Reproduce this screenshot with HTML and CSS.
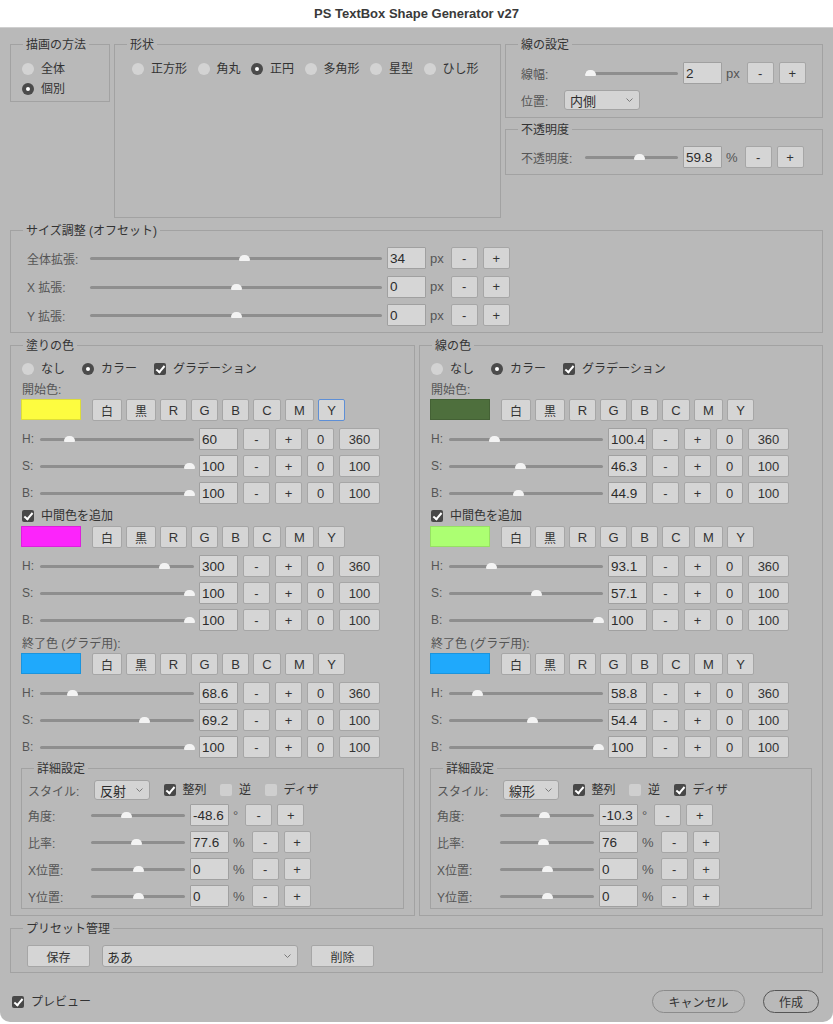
FILE: index.html
```html
<!DOCTYPE html>
<html lang="ja">
<head>
    <meta charset="UTF-8">
    <meta name="viewport" content="width=device-width, initial-scale=1.0">
    <title>PS TextBox Shape Generator v27</title>
    <link rel="stylesheet" href="styles.css">
</head>
<body>
<div class="window">
    <div class="titlebar">PS TextBox Shape Generator v27</div>
    <div class="content">

        <div class="top-row">
            <fieldset class="group method">
                <legend>描画の方法</legend>
                <div class="opt method-line"><span class="radio"></span>全体</div>
                <div class="opt method-line"><span class="radio on"></span>個別</div>
            </fieldset>

            <fieldset class="group shape">
                <legend>形状</legend>
                <div class="shape-row">
                    <span class="opt"><span class="radio"></span>正方形</span>
                    <span class="opt"><span class="radio"></span>角丸</span>
                    <span class="opt"><span class="radio on"></span>正円</span>
                    <span class="opt"><span class="radio"></span>多角形</span>
                    <span class="opt"><span class="radio"></span>星型</span>
                    <span class="opt"><span class="radio"></span>ひし形</span>
                </div>
            </fieldset>

            <div class="stack">
                <fieldset class="group stroke">
                    <legend>線の設定</legend>
                    <div class="ctl-row">
                        <span class="lbl w64">線幅:</span>
                        <div class="slider s93"><span class="thumb" style="--v:0.01"></span></div>
                        <input class="field" type="text" value="2">
                        <span class="unit">px</span>
                        <button class="btn pm">-</button>
                        <button class="btn pm">+</button>
                    </div>
                    <div class="ctl-row pos-row">
                        <span class="lbl w43">位置:</span>
                        <div class="select sel-pos">内側<svg viewBox="0 0 7 4"><polyline points="0.5,0.5 3.5,3.5 6.5,0.5"/></svg></div>
                    </div>
                </fieldset>

                <fieldset class="group opacity">
                    <legend>不透明度</legend>
                    <div class="ctl-row">
                        <span class="lbl w64">不透明度:</span>
                        <div class="slider s93"><span class="thumb" style="--v:0.598"></span></div>
                        <input class="field" type="text" value="59.8">
                        <span class="unit">%</span>
                        <button class="btn pm">-</button>
                        <button class="btn pm">+</button>
                    </div>
                </fieldset>
            </div>
        </div>

        <fieldset class="group size">
            <legend>サイズ調整 (オフセット)</legend>
            <div class="ctl-row size-row">
                <span class="lbl w63">全体拡張:</span>
                <div class="slider s292"><span class="thumb" style="--v:0.53"></span></div>
                <input class="field" type="text" value="34">
                <span class="unit">px</span>
                <button class="btn pm">-</button>
                <button class="btn pm">+</button>
            </div>
            <div class="ctl-row size-row">
                <span class="lbl w63">X 拡張:</span>
                <div class="slider s292"><span class="thumb" style="--v:0.5"></span></div>
                <input class="field" type="text" value="0">
                <span class="unit">px</span>
                <button class="btn pm">-</button>
                <button class="btn pm">+</button>
            </div>
            <div class="ctl-row size-row">
                <span class="lbl w63">Y 拡張:</span>
                <div class="slider s292"><span class="thumb" style="--v:0.5"></span></div>
                <input class="field" type="text" value="0">
                <span class="unit">px</span>
                <button class="btn pm">-</button>
                <button class="btn pm">+</button>
            </div>
        </fieldset>

        <div class="colors">
            <!-- fill -->
            <fieldset class="group color-panel">
                <legend>塗りの色</legend>
                <div class="opts">
                    <span class="opt"><span class="radio"></span>なし</span>
                    <span class="opt"><span class="radio on"></span>カラー</span>
                    <span class="opt"><span class="check on"></span>グラデーション</span>
                </div>
                <div class="lbl cap">開始色:</div>
                <div class="swatch-row">
                    <span class="swatch yellow"></span>
                    <button class="btn cbtn kj">白</button><button class="btn cbtn kj">黒</button><button class="btn cbtn">R</button><button class="btn cbtn">G</button><button class="btn cbtn">B</button><button class="btn cbtn c">C</button><button class="btn cbtn m">M</button><button class="btn cbtn focus">Y</button>
                </div>
                <div class="ctl-row hsv-row">
                    <span class="lbl w18">H:</span>
                    <div class="slider s154"><span class="thumb" style="--v:0.167"></span></div>
                    <input class="field" type="text" value="60">
                    <button class="btn pm">-</button><button class="btn pm">+</button><button class="btn pm">0</button><button class="btn lim">360</button>
                </div>
                <div class="ctl-row hsv-row">
                    <span class="lbl w18">S:</span>
                    <div class="slider s154"><span class="thumb" style="--v:1"></span></div>
                    <input class="field" type="text" value="100">
                    <button class="btn pm">-</button><button class="btn pm">+</button><button class="btn pm">0</button><button class="btn lim">100</button>
                </div>
                <div class="ctl-row hsv-row">
                    <span class="lbl w18">B:</span>
                    <div class="slider s154"><span class="thumb" style="--v:1"></span></div>
                    <input class="field" type="text" value="100">
                    <button class="btn pm">-</button><button class="btn pm">+</button><button class="btn pm">0</button><button class="btn lim">100</button>
                </div>

                <div class="opts mid-check">
                    <span class="opt"><span class="check on"></span>中間色を追加</span>
                </div>
                <div class="swatch-row">
                    <span class="swatch magenta"></span>
                    <button class="btn cbtn kj">白</button><button class="btn cbtn kj">黒</button><button class="btn cbtn">R</button><button class="btn cbtn">G</button><button class="btn cbtn">B</button><button class="btn cbtn c">C</button><button class="btn cbtn m">M</button><button class="btn cbtn">Y</button>
                </div>
                <div class="ctl-row hsv-row">
                    <span class="lbl w18">H:</span>
                    <div class="slider s154"><span class="thumb" style="--v:0.833"></span></div>
                    <input class="field" type="text" value="300">
                    <button class="btn pm">-</button><button class="btn pm">+</button><button class="btn pm">0</button><button class="btn lim">360</button>
                </div>
                <div class="ctl-row hsv-row">
                    <span class="lbl w18">S:</span>
                    <div class="slider s154"><span class="thumb" style="--v:1"></span></div>
                    <input class="field" type="text" value="100">
                    <button class="btn pm">-</button><button class="btn pm">+</button><button class="btn pm">0</button><button class="btn lim">100</button>
                </div>
                <div class="ctl-row hsv-row">
                    <span class="lbl w18">B:</span>
                    <div class="slider s154"><span class="thumb" style="--v:1"></span></div>
                    <input class="field" type="text" value="100">
                    <button class="btn pm">-</button><button class="btn pm">+</button><button class="btn pm">0</button><button class="btn lim">100</button>
                </div>

                <div class="lbl cap end-cap">終了色 (グラデ用):</div>
                <div class="swatch-row">
                    <span class="swatch blue"></span>
                    <button class="btn cbtn kj">白</button><button class="btn cbtn kj">黒</button><button class="btn cbtn">R</button><button class="btn cbtn">G</button><button class="btn cbtn">B</button><button class="btn cbtn c">C</button><button class="btn cbtn m">M</button><button class="btn cbtn">Y</button>
                </div>
                <div class="ctl-row hsv-row">
                    <span class="lbl w18">H:</span>
                    <div class="slider s154"><span class="thumb" style="--v:0.19"></span></div>
                    <input class="field" type="text" value="68.6">
                    <button class="btn pm">-</button><button class="btn pm">+</button><button class="btn pm">0</button><button class="btn lim">360</button>
                </div>
                <div class="ctl-row hsv-row">
                    <span class="lbl w18">S:</span>
                    <div class="slider s154"><span class="thumb" style="--v:0.692"></span></div>
                    <input class="field" type="text" value="69.2">
                    <button class="btn pm">-</button><button class="btn pm">+</button><button class="btn pm">0</button><button class="btn lim">100</button>
                </div>
                <div class="ctl-row hsv-row">
                    <span class="lbl w18">B:</span>
                    <div class="slider s154"><span class="thumb" style="--v:1"></span></div>
                    <input class="field" type="text" value="100">
                    <button class="btn pm">-</button><button class="btn pm">+</button><button class="btn pm">0</button><button class="btn lim">100</button>
                </div>

                <fieldset class="group detail">
                    <legend>詳細設定</legend>
                    <div class="ctl-row style-row">
                        <span class="lbl w66">スタイル:</span>
                        <div class="select sel-style">反射<svg viewBox="0 0 7 4"><polyline points="0.5,0.5 3.5,3.5 6.5,0.5"/></svg></div>
                        <span class="opt"><span class="check on"></span>整列</span>
                        <span class="opt"><span class="check"></span>逆</span>
                        <span class="opt"><span class="check"></span>ディザ</span>
                    </div>
                    <div class="ctl-row detail-row">
                        <span class="lbl w63">角度:</span>
                        <div class="slider s94"><span class="thumb" style="--v:0.36"></span></div>
                        <input class="field" type="text" value="-48.6">
                        <span class="unit">°</span>
                        <button class="btn pm">-</button><button class="btn pm">+</button>
                    </div>
                    <div class="ctl-row detail-row">
                        <span class="lbl w63">比率:</span>
                        <div class="slider s94"><span class="thumb" style="--v:0.48"></span></div>
                        <input class="field" type="text" value="77.6">
                        <span class="unit">%</span>
                        <button class="btn pm">-</button><button class="btn pm">+</button>
                    </div>
                    <div class="ctl-row detail-row">
                        <span class="lbl w63">X位置:</span>
                        <div class="slider s94"><span class="thumb" style="--v:0.5"></span></div>
                        <input class="field" type="text" value="0">
                        <span class="unit">%</span>
                        <button class="btn pm">-</button><button class="btn pm">+</button>
                    </div>
                    <div class="ctl-row detail-row">
                        <span class="lbl w63">Y位置:</span>
                        <div class="slider s94"><span class="thumb" style="--v:0.5"></span></div>
                        <input class="field" type="text" value="0">
                        <span class="unit">%</span>
                        <button class="btn pm">-</button><button class="btn pm">+</button>
                    </div>
                </fieldset>
            </fieldset>

            <!-- stroke -->
            <fieldset class="group color-panel right">
                <legend>線の色</legend>
                <div class="opts">
                    <span class="opt"><span class="radio"></span>なし</span>
                    <span class="opt"><span class="radio on"></span>カラー</span>
                    <span class="opt"><span class="check on"></span>グラデーション</span>
                </div>
                <div class="lbl cap">開始色:</div>
                <div class="swatch-row">
                    <span class="swatch green"></span>
                    <button class="btn cbtn kj">白</button><button class="btn cbtn kj">黒</button><button class="btn cbtn">R</button><button class="btn cbtn">G</button><button class="btn cbtn">B</button><button class="btn cbtn c">C</button><button class="btn cbtn m">M</button><button class="btn cbtn">Y</button>
                </div>
                <div class="ctl-row hsv-row">
                    <span class="lbl w18">H:</span>
                    <div class="slider s154"><span class="thumb" style="--v:0.279"></span></div>
                    <input class="field" type="text" value="100.4">
                    <button class="btn pm">-</button><button class="btn pm">+</button><button class="btn pm">0</button><button class="btn lim">360</button>
                </div>
                <div class="ctl-row hsv-row">
                    <span class="lbl w18">S:</span>
                    <div class="slider s154"><span class="thumb" style="--v:0.463"></span></div>
                    <input class="field" type="text" value="46.3">
                    <button class="btn pm">-</button><button class="btn pm">+</button><button class="btn pm">0</button><button class="btn lim">100</button>
                </div>
                <div class="ctl-row hsv-row">
                    <span class="lbl w18">B:</span>
                    <div class="slider s154"><span class="thumb" style="--v:0.449"></span></div>
                    <input class="field" type="text" value="44.9">
                    <button class="btn pm">-</button><button class="btn pm">+</button><button class="btn pm">0</button><button class="btn lim">100</button>
                </div>

                <div class="opts mid-check">
                    <span class="opt"><span class="check on"></span>中間色を追加</span>
                </div>
                <div class="swatch-row">
                    <span class="swatch lime"></span>
                    <button class="btn cbtn kj">白</button><button class="btn cbtn kj">黒</button><button class="btn cbtn">R</button><button class="btn cbtn">G</button><button class="btn cbtn">B</button><button class="btn cbtn c">C</button><button class="btn cbtn m">M</button><button class="btn cbtn">Y</button>
                </div>
                <div class="ctl-row hsv-row">
                    <span class="lbl w18">H:</span>
                    <div class="slider s154"><span class="thumb" style="--v:0.259"></span></div>
                    <input class="field" type="text" value="93.1">
                    <button class="btn pm">-</button><button class="btn pm">+</button><button class="btn pm">0</button><button class="btn lim">360</button>
                </div>
                <div class="ctl-row hsv-row">
                    <span class="lbl w18">S:</span>
                    <div class="slider s154"><span class="thumb" style="--v:0.571"></span></div>
                    <input class="field" type="text" value="57.1">
                    <button class="btn pm">-</button><button class="btn pm">+</button><button class="btn pm">0</button><button class="btn lim">100</button>
                </div>
                <div class="ctl-row hsv-row">
                    <span class="lbl w18">B:</span>
                    <div class="slider s154"><span class="thumb" style="--v:1"></span></div>
                    <input class="field" type="text" value="100">
                    <button class="btn pm">-</button><button class="btn pm">+</button><button class="btn pm">0</button><button class="btn lim">100</button>
                </div>

                <div class="lbl cap end-cap">終了色 (グラデ用):</div>
                <div class="swatch-row">
                    <span class="swatch blue"></span>
                    <button class="btn cbtn kj">白</button><button class="btn cbtn kj">黒</button><button class="btn cbtn">R</button><button class="btn cbtn">G</button><button class="btn cbtn">B</button><button class="btn cbtn c">C</button><button class="btn cbtn m">M</button><button class="btn cbtn">Y</button>
                </div>
                <div class="ctl-row hsv-row">
                    <span class="lbl w18">H:</span>
                    <div class="slider s154"><span class="thumb" style="--v:0.163"></span></div>
                    <input class="field" type="text" value="58.8">
                    <button class="btn pm">-</button><button class="btn pm">+</button><button class="btn pm">0</button><button class="btn lim">360</button>
                </div>
                <div class="ctl-row hsv-row">
                    <span class="lbl w18">S:</span>
                    <div class="slider s154"><span class="thumb" style="--v:0.544"></span></div>
                    <input class="field" type="text" value="54.4">
                    <button class="btn pm">-</button><button class="btn pm">+</button><button class="btn pm">0</button><button class="btn lim">100</button>
                </div>
                <div class="ctl-row hsv-row">
                    <span class="lbl w18">B:</span>
                    <div class="slider s154"><span class="thumb" style="--v:1"></span></div>
                    <input class="field" type="text" value="100">
                    <button class="btn pm">-</button><button class="btn pm">+</button><button class="btn pm">0</button><button class="btn lim">100</button>
                </div>

                <fieldset class="group detail">
                    <legend>詳細設定</legend>
                    <div class="ctl-row style-row">
                        <span class="lbl w66">スタイル:</span>
                        <div class="select sel-style">線形<svg viewBox="0 0 7 4"><polyline points="0.5,0.5 3.5,3.5 6.5,0.5"/></svg></div>
                        <span class="opt"><span class="check on"></span>整列</span>
                        <span class="opt"><span class="check"></span>逆</span>
                        <span class="opt"><span class="check on"></span>ディザ</span>
                    </div>
                    <div class="ctl-row detail-row">
                        <span class="lbl w63">角度:</span>
                        <div class="slider s94"><span class="thumb" style="--v:0.47"></span></div>
                        <input class="field" type="text" value="-10.3">
                        <span class="unit">°</span>
                        <button class="btn pm">-</button><button class="btn pm">+</button>
                    </div>
                    <div class="ctl-row detail-row">
                        <span class="lbl w63">比率:</span>
                        <div class="slider s94"><span class="thumb" style="--v:0.46"></span></div>
                        <input class="field" type="text" value="76">
                        <span class="unit">%</span>
                        <button class="btn pm">-</button><button class="btn pm">+</button>
                    </div>
                    <div class="ctl-row detail-row">
                        <span class="lbl w63">X位置:</span>
                        <div class="slider s94"><span class="thumb" style="--v:0.5"></span></div>
                        <input class="field" type="text" value="0">
                        <span class="unit">%</span>
                        <button class="btn pm">-</button><button class="btn pm">+</button>
                    </div>
                    <div class="ctl-row detail-row">
                        <span class="lbl w63">Y位置:</span>
                        <div class="slider s94"><span class="thumb" style="--v:0.5"></span></div>
                        <input class="field" type="text" value="0">
                        <span class="unit">%</span>
                        <button class="btn pm">-</button><button class="btn pm">+</button>
                    </div>
                </fieldset>
            </fieldset>
        </div>

        <fieldset class="group preset">
            <legend>プリセット管理</legend>
            <div class="ctl-row preset-row">
                <button class="btn wide">保存</button>
                <div class="select sel-preset">ああ<svg viewBox="0 0 7 4"><polyline points="0.5,0.5 3.5,3.5 6.5,0.5"/></svg></div>
                <button class="btn wide">削除</button>
            </div>
        </fieldset>

        <div class="footer">
            <span class="opt"><span class="check on"></span>プレビュー</span>
            <div class="actions">
                <button class="pill cancel">キャンセル</button>
                <button class="pill primary">作成</button>
            </div>
        </div>
    </div>
</div>
</body>
</html>
```

FILE: styles.css
```css
* {
    box-sizing: border-box;
}

body {
    margin: 0;
    background-color: #ffffff;
    font-family: "Liberation Sans", "Noto Sans CJK JP", sans-serif;
    font-size: 12px;
    color: #333;
}

.window {
    width: 833px;
    height: 1022px;
    background-color: #b9b9b9;
    border-radius: 0 0 10px 10px;
    overflow: hidden;
}

.titlebar {
    height: 28px;
    background-color: #ffffff;
    border-bottom: 1px solid #cfcfcf;
    text-align: center;
    font-size: 13px;
    font-weight: bold;
    line-height: 27px;
    color: #3a3a3a;
}

.content {
    padding: 8px 10px 0;
}

/* fieldsets */
.group {
    margin: 0;
    padding: 0 11px;
    border: 1px solid #a2a2a2;
    min-width: 0;
}
.group legend {
    margin-left: 1px;
    padding: 1px 3px 0;
    font-size: 12px;
    line-height: 16px;
    color: #333;
}

.top-row {
    display: flex;
    align-items: flex-start;
    gap: 4px;
}
.method {
    width: 100px;
    padding-top: 6px;
    padding-bottom: 2px;
}
.method-line {
    height: 20px;
    display: flex;
    gap: 8px;
}
.shape {
    width: 387px;
    height: 182px;
    padding-top: 6px;
}
.shape-row {
    display: flex;
    gap: 10.5px;
    height: 20px;
    margin-left: 6px;
    align-items: center;
}
.stack {
    width: 318px;
    display: flex;
    flex-direction: column;
    gap: 3px;
}
.stroke {
    padding-top: 9px;
    padding-bottom: 6px;
}
.stroke .ctl-row, .opacity .ctl-row {
    padding-left: 4px;
}
.pos-row {
    margin-top: 5px;
}
.opacity {
    padding-top: 8px;
    padding-bottom: 6px;
}

.size {
    margin-top: 4px;
    padding-top: 8px;
    padding-bottom: 6px;
}
.size-row {
    padding-left: 5px;
}
.size-row + .size-row {
    margin-top: 6.5px;
}

/* options */
.opt {
    display: inline-flex;
    align-items: center;
    gap: 7px;
    line-height: 16px;
    color: #333;
    white-space: nowrap;
}
.radio {
    position: relative;
    flex: none;
    width: 12px;
    height: 12px;
    border-radius: 50%;
    background-color: #d3d3d3;
}
.radio.on {
    background-color: #4b4b4b;
}
.radio.on::after {
    content: "";
    position: absolute;
    left: 4px;
    top: 4px;
    width: 4px;
    height: 4px;
    border-radius: 50%;
    background-color: #fff;
}
.check {
    position: relative;
    flex: none;
    width: 12px;
    height: 12px;
    border-radius: 2px;
    background-color: #cfcfcf;
}
.check.on {
    background-color: #484848;
}
.check.on::after {
    content: "";
    position: absolute;
    left: 4px;
    top: 1px;
    width: 3px;
    height: 7px;
    border: solid #fff;
    border-width: 0 2px 2px 0;
    transform: rotate(40deg);
}

/* control rows */
.ctl-row {
    display: flex;
    align-items: center;
    height: 22px;
}
.lbl {
    flex: none;
    color: #555;
    white-space: nowrap;
}
.w18 { width: 18px; }
.w43 { width: 43px; }
.w63 { width: 63px; }
.w64 { width: 64px; }
.w66 { width: 66px; }

.slider {
    position: relative;
    flex: none;
    height: 22px;
    margin-right: 5px;
}
.slider::before {
    content: "";
    position: absolute;
    left: 0;
    right: 0;
    top: 10px;
    height: 3px;
    border-radius: 2px;
    background-color: #8e8e8e;
}
.thumb {
    position: absolute;
    top: 8px;
    left: calc(5px + (100% - 10px) * var(--v));
    width: 11px;
    height: 6px;
    margin-left: -5.5px;
    border-radius: 5px 5px 1px 1px;
    background-color: #f3f3f3;
}
.s93 { width: 93px; }
.s94 { width: 94px; }
.s154 { width: 154px; }
.s292 { width: 292px; }

.field {
    flex: none;
    width: 39px;
    height: 22px;
    padding: 0 1px 0 2px;
    border: 1px solid #a0a0a0;
    border-radius: 1px;
    background-color: #d6d6d6;
    font-family: inherit;
    font-size: 13.5px;
    color: #2c2c2c;
    outline: none;
}
.unit {
    flex: none;
    margin: 0 7px 0 4px;
    font-size: 13px;
    color: #555;
}

.btn {
    flex: none;
    height: 22px;
    padding: 0;
    border: 1px solid #a6a6a6;
    border-radius: 2px;
    background-color: #d5d5d5;
    font-family: inherit;
    font-size: 13px;
    color: #333;
}
.pm {
    width: 27px;
}
.lim {
    width: 41px;
}
.btn + .btn, .field + .btn {
    margin-left: 5px;
}
.unit + .btn {
    margin-left: 0;
}

.select {
    display: flex;
    align-items: center;
    justify-content: space-between;
    flex: none;
    height: 20px;
    padding: 0 6px 0 5px;
    border: 1px solid #a3a3a3;
    border-radius: 3px;
    background-color: #d4d4d4;
    font-size: 13px;
    color: #2e2e2e;
}
.select svg {
    width: 7px;
    height: 4px;
    fill: none;
    stroke: #7a7a7a;
    stroke-width: 1;
}
.sel-pos { width: 76px; }
.sel-style { width: 56px; }

/* colour panels */
.colors {
    display: flex;
    gap: 4px;
    margin-top: 4px;
}
.color-panel {
    width: 405px;
    padding: 7px 10px 6px 11px;
}
.color-panel.right {
    width: 404px;
}
.opts {
    display: flex;
    gap: 17px;
    height: 16px;
}
.mid-check {
    margin-top: 4px;
}
.cap {
    height: 16px;
    line-height: 16px;
    margin-top: 5px;
}
.end-cap {
    margin-top: 5px;
}
.swatch-row {
    display: flex;
    align-items: flex-start;
    height: 22px;
    margin-top: 1px;
}
.mid-check + .swatch-row {
    margin-top: 2px;
}
.swatch {
    flex: none;
    width: 60px;
    height: 21px;
    margin: 0 11px 0 -1px;
    border: 1px solid rgba(0, 0, 0, 0.12);
}
.swatch.yellow { background-color: #fdfc40; }
.swatch.magenta { background-color: #fc24fb; }
.swatch.blue { background-color: #1fa9fc; }
.swatch.green { background-color: #4e6f3d; }
.swatch.lime { background-color: #acff72; }

.cbtn {
    width: 27px;
}
.cbtn.kj {
    width: 30px;
    font-size: 12px;
}
.cbtn.c { width: 28px; }
.cbtn.m { width: 29px; }
.swatch-row .btn + .btn {
    margin-left: 4px;
}
.cbtn.focus {
    border-color: #5e8fd6;
}

.hsv-row {
    margin-top: 5px;
}
.swatch-row + .hsv-row {
    margin-top: 7px;
}

/* detail settings */
.detail {
    margin: 2px 0 0 -1px;
    padding: 2px 6px 1px;
}
.detail legend {
    margin-left: 6px;
}
.style-row .opt {
    margin-left: 13.5px;
}
.detail-row {
    margin-top: 5px;
}
.style-row + .detail-row {
    margin-top: 3px;
}

/* presets */
.preset {
    margin-top: 4px;
    padding-top: 8px;
    padding-bottom: 5px;
}
.preset-row {
    padding-left: 5px;
}
.wide {
    width: 63px;
    font-size: 12px;
}
.sel-preset {
    width: 196px;
    height: 22px;
    margin: 0 13px 0 12px;
    padding-left: 4px;
    font-size: 13px;
}

/* footer */
.footer {
    display: flex;
    justify-content: space-between;
    align-items: center;
    margin-top: 17px;
    padding: 0 4px 0 2px;
}
.actions {
    display: flex;
    gap: 18px;
}
.pill {
    height: 23px;
    border: 1px solid #8b8b8b;
    border-radius: 12px;
    background-color: transparent;
    font-family: inherit;
    font-size: 12px;
    color: #333;
}
.pill.cancel {
    width: 93px;
}
.pill.primary {
    width: 56px;
    border-color: #555;
}
```
